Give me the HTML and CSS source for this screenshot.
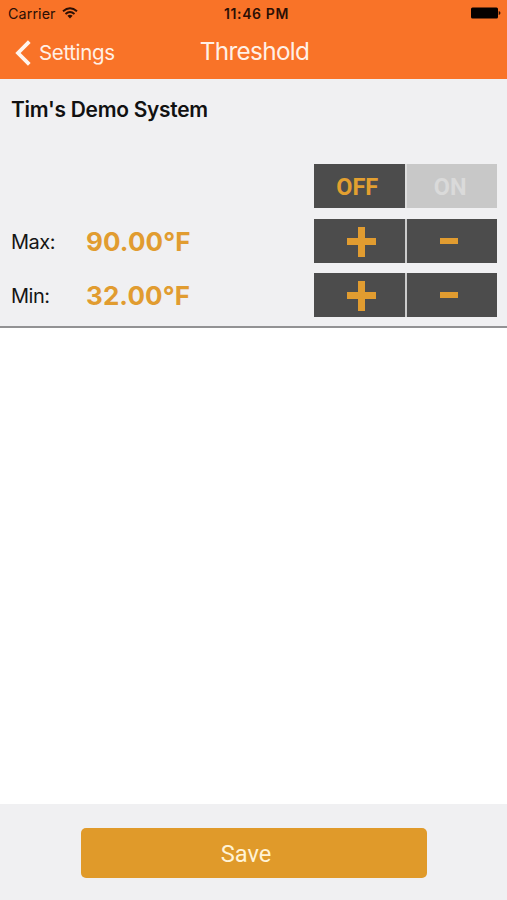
FILE: index.html
```html
<!DOCTYPE html>
<html lang="en">
<head>
<meta charset="utf-8">
<title>Threshold</title>
<link rel="stylesheet" href="styles.css">
</head>
<body>
<div class="screen">
  <header class="header">
    <div class="status">
      <div class="carrier"><span class="carrier-name">Carrier</span>
        <svg class="wifi" width="16" height="12" viewBox="0 0 16 12" fill="none" stroke="#2b0f05" stroke-width="1.9"><path d="M1 4.3Q8-1.7 15 4.3M3.5 7Q8 3.2 12.5 7"/><path d="M5.4 8.7Q8 6.6 10.6 8.7L8 11.4Z" fill="#2b0f05" stroke="none"/></svg>
      </div>
      <div class="clock">11:46 PM</div>
      <svg class="battery" width="31" height="12" viewBox="0 0 31 12"><rect x="1" y=".5" width="27" height="11" rx="1.5" fill="#050100"/><path d="M28.7 4Q30.5 4.3 30.5 6T28.7 8Z" fill="#2b0f05"/></svg>
    </div>
    <nav class="nav">
      <a class="back"><svg width="17" height="26" viewBox="0 0 17 26" fill="none" stroke="#fff5ee" stroke-width="3.8"><path d="M14.3 1.6L3 13L14.3 24.4"/></svg><span>Settings</span></a>
      <h1 class="title">Threshold</h1>
    </nav>
  </header>
  <section class="panel">
    <h2 class="system">Tim's Demo System</h2>
    <div class="row toggle-row">
      <div class="pair toggle"><button class="seg off">OFF</button><button class="seg on">ON</button></div>
    </div>
    <div class="row">
      <span class="label">Max:</span><span class="value">90.00°F</span>
      <div class="pair">
        <button class="seg" aria-label="Increase"><i class="plus"></i></button>
        <button class="seg" aria-label="Decrease"><i class="minus"></i></button>
      </div>
    </div>
    <div class="row">
      <span class="label">Min:</span><span class="value">32.00°F</span>
      <div class="pair">
        <button class="seg" aria-label="Increase"><i class="plus"></i></button>
        <button class="seg" aria-label="Decrease"><i class="minus"></i></button>
      </div>
    </div>
  </section>
  <main class="space"></main>
  <footer class="footer"><button class="save">Save</button></footer>
</div>
</body>
</html>
```
FILE: styles.css
```css
* { box-sizing: border-box; }
body { margin: 0; font-family: Inter, "Liberation Sans", sans-serif; }
button { border: 0; padding: 0; margin: 0; }
h1, h2 { margin: 0; font-weight: 400; }
.screen { width: 507px; height: 900px; display: flex; flex-direction: column; background: #fff; overflow: hidden; }
.header { height: 79px; background: #f97328; }
.status { height: 26px; display: grid; grid-template-columns: 1fr auto 1fr; align-items: center; padding: 0 6px 0 8px; color: #2b0f05; }
.carrier { display: flex; align-items: center; gap: 6px; font-size: 14.3px; letter-spacing: .1px; }
.wifi { display: block; margin-top: -1px; }
.clock { font-size: 14px; font-weight: 600; letter-spacing: .6px; margin-left: 4px; }
.battery { justify-self: end; }
.nav { height: 53px; display: grid; grid-template-columns: 1fr auto 1fr; color: #fff0e6; padding: 0 13px 0 15px; }
.back { display: flex; align-items: center; gap: 7px; font-size: 20.5px; letter-spacing: -.35px; }
.title { font-size: 24.3px; line-height: 51px; letter-spacing: -.65px; }
.panel { height: 249px; background: #f0f0f2; border-bottom: 2px solid #929294; padding: 0 10px 0 11px; }
.system { height: 85px; line-height: 61px; font-size: 20.9px; font-weight: 600; letter-spacing: -.25px; color: #111; }
.row { height: 44px; margin-bottom: 10px; display: flex; align-items: center; }
.toggle-row { margin-bottom: 11px; }
.label { width: 75px; padding-top: 1px; font-size: 20px; letter-spacing: -.5px; color: #151515; }
.value { font-size: 26px; font-weight: 650; letter-spacing: .1px; color: #e19c30; }
.pair { margin-left: auto; width: 183px; height: 44px; display: grid; grid-template-columns: 90.5px 90.5px; gap: 2px; background: linear-gradient(#cbcbcb, #cbcbcb) 90px 0 / 3px 100% no-repeat; }
.toggle { background: #dedede; }
.seg { background: #4c4c4c; color: #e3a030; font: 700 23.5px Roboto, sans-serif; display: flex; align-items: center; justify-content: center; }
.off { padding: 2px 4px 0 0; }
.on { background: #c8c8c8; color: #dadada; padding: 2px 3px 0 0; }
.plus { width: 29px; height: 30px; margin-left: 4px; margin-top: 1px; background: linear-gradient(#e19c30, #e19c30) center / 7px 30px no-repeat, linear-gradient(#e19c30, #e19c30) center / 29px 7px no-repeat; }
.minus { width: 18px; height: 6px; background: #e19c30; margin: 0 5px 1px 0; }
.space { flex: 1; }
.footer { height: 96px; padding: 24px 80px 0 81px; background: #f0f0f2; }
.save { display: block; width: 346px; height: 50px; padding: 2px 16px 0 0; border-radius: 5px; background: #e09a2a; color: #fff3d6; font: 400 23.7px Roboto, sans-serif; }
```
